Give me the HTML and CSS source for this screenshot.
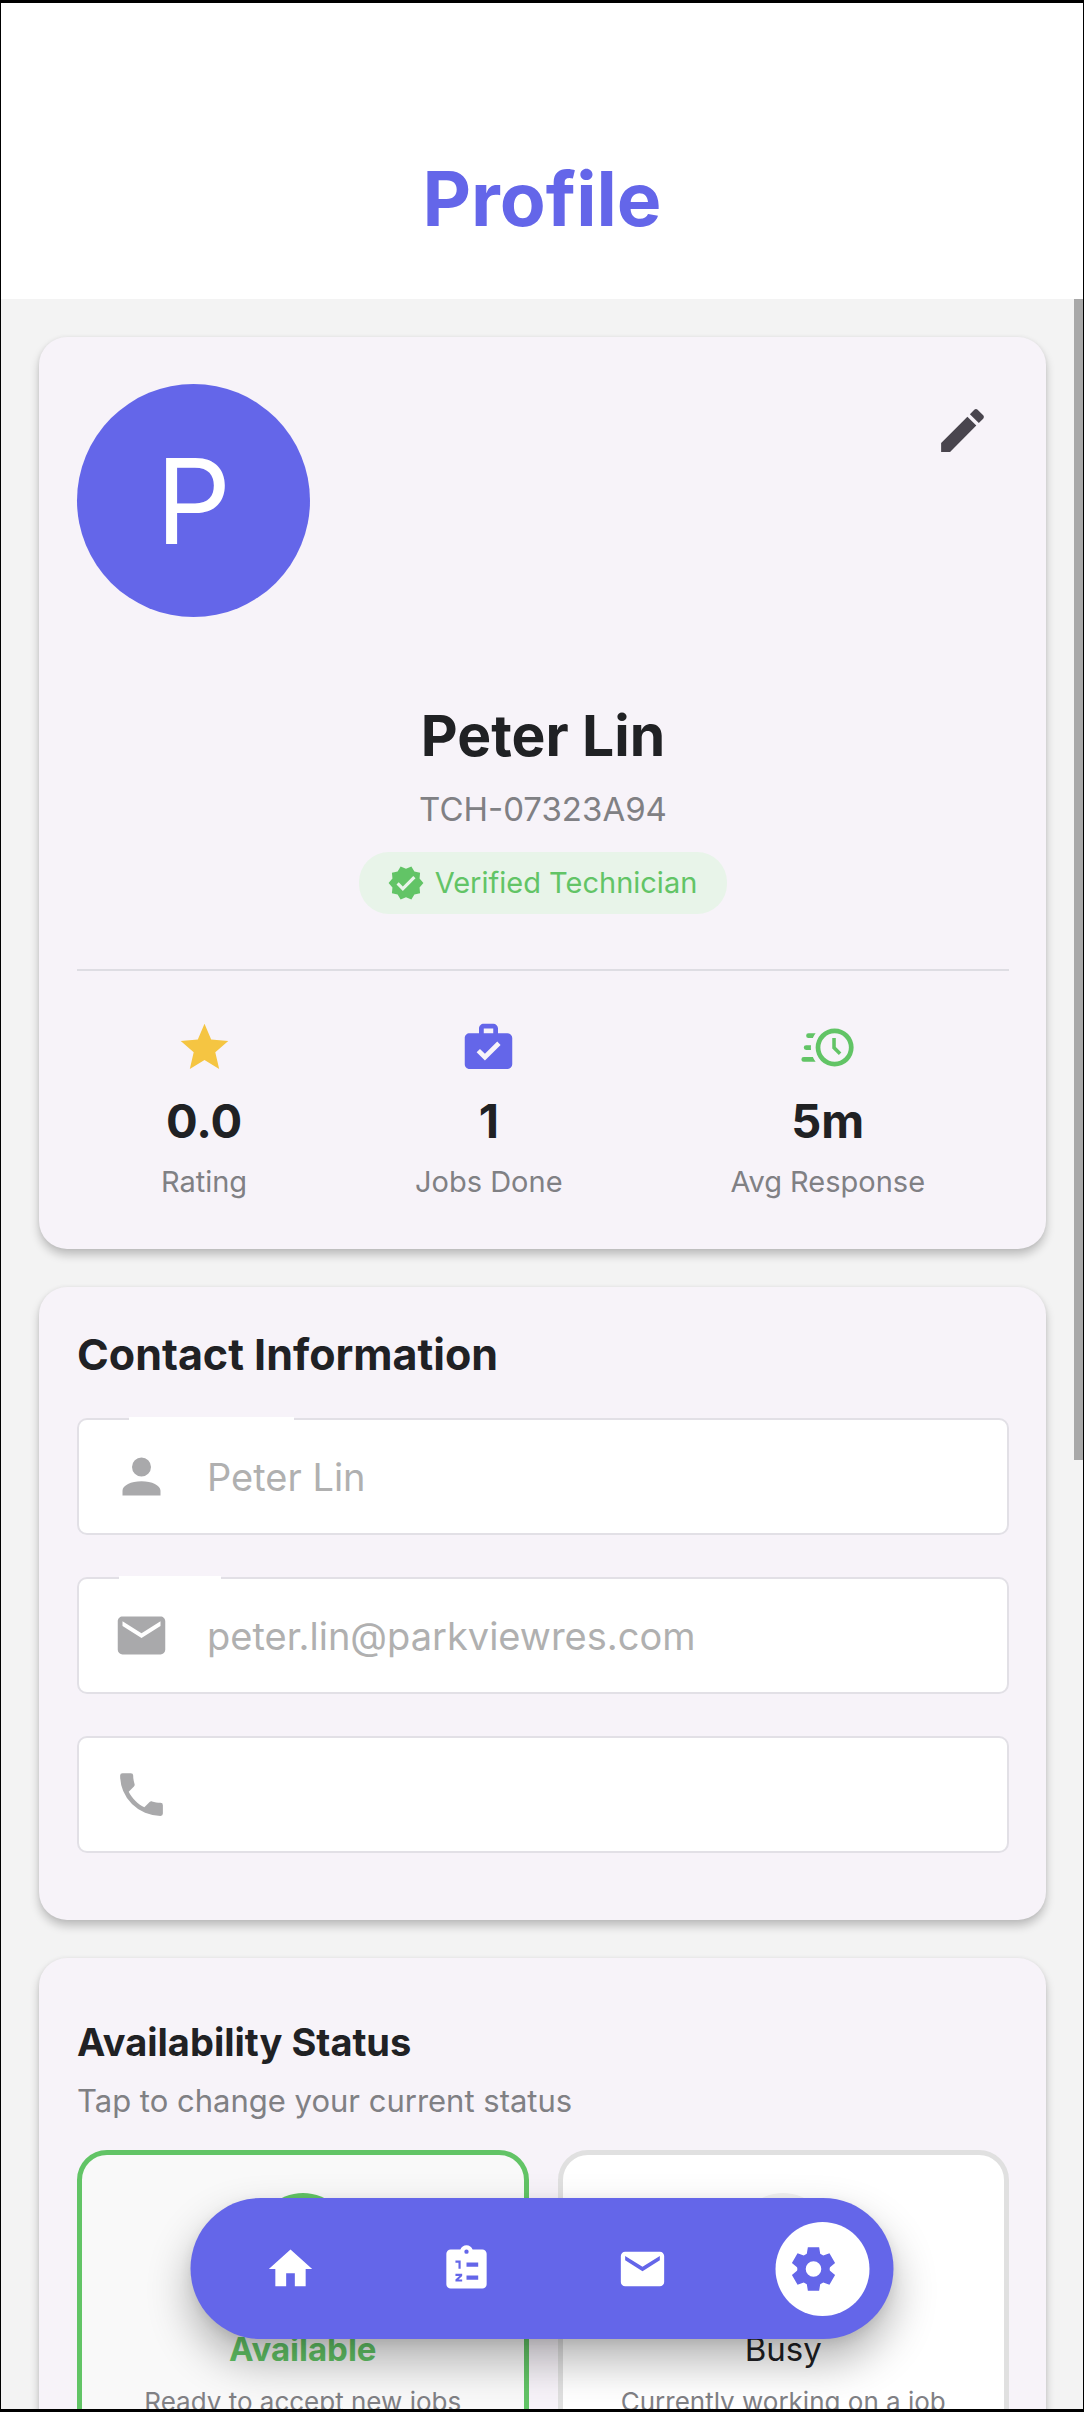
FILE: index.html
```html
<!DOCTYPE html>
<html lang="en">
<head>
<meta charset="utf-8">
<meta name="viewport" content="width=device-width, initial-scale=1">
<title>Profile</title>
<link rel="stylesheet" href="styles.css">
</head>
<body>
<div class="app">
  <header class="header"><h1>Profile</h1></header>
  <main class="content">
    <section class="card profile">
      <div class="profile-top">
        <div class="avatar">P</div>
        <button class="edit" type="button" aria-label="Edit profile">
          <svg class="icon icon-edit" viewBox="0 0 24 24"><path d="M20.71,7.04C21.1,6.65 21.1,6 20.71,5.63L18.37,3.29C18,2.9 17.35,2.9 16.96,3.29L15.12,5.12L18.87,8.87M3,17.25V21H6.75L17.81,9.93L14.06,6.18L3,17.25Z"/></svg>
        </button>
      </div>
      <div class="identity">
        <h2>Peter Lin</h2>
        <p class="code">TCH-07323A94</p>
        <p class="badge">
          <svg class="icon icon-badge" viewBox="0 0 24 24"><path d="M23,12L20.56,9.22L20.9,5.54L17.29,4.72L15.4,1.54L12,3L8.6,1.54L6.71,4.72L3.1,5.53L3.44,9.21L1,12L3.44,14.78L3.1,18.47L6.71,19.29L8.6,22.47L12,21L15.4,22.46L17.29,19.28L20.9,18.46L20.56,14.78L23,12M10,17L6,13L7.41,11.59L10,14.17L16.59,7.58L18,9L10,17Z"/></svg>
          <span>Verified Technician</span>
        </p>
      </div>
      <div class="stats">
        <div class="stat">
          <svg class="icon star" viewBox="0 0 24 24"><path d="M12,17.27L18.18,21L16.54,13.97L22,9.24L14.81,8.62L12,2L9.19,8.62L2,9.24L7.45,13.97L5.82,21L12,17.27Z"/></svg>
          <strong>0.0</strong><span>Rating</span>
        </div>
        <div class="stat">
          <svg class="icon jobs" viewBox="0 0 24 24"><path d="M10,2H14A2,2 0 0,1 16,4V6H20A2,2 0 0,1 22,8V19A2,2 0 0,1 20,21H4C2.89,21 2,20.1 2,19V8C2,6.89 2.89,6 4,6H8V4C8,2.89 8.89,2 10,2M14,6V4H10V6H14M10.5,17.5L17.09,10.91L15.68,9.5L10.5,14.67L8.41,12.59L7,14L10.5,17.5Z"/></svg>
          <strong>1</strong><span>Jobs Done</span>
        </div>
        <div class="stat">
          <svg class="icon clock" viewBox="0 0 24 24"><path d="M15,4A8,8 0 0,1 23,12A8,8 0 0,1 15,20A8,8 0 0,1 7,12A8,8 0 0,1 15,4M15,6A6,6 0 0,0 9,12A6,6 0 0,0 15,18A6,6 0 0,0 21,12A6,6 0 0,0 15,6M14,8H15.5V11.78L17.83,14.11L16.77,15.17L14,12.4V8M2,18A1,1 0 0,1 1,17A1,1 0 0,1 2,16H5.83C6.14,16.71 6.54,17.38 7,18H2M3,13A1,1 0 0,1 2,12A1,1 0 0,1 3,11H5.05L5,12L5.05,13H3M4,8A1,1 0 0,1 3,7A1,1 0 0,1 4,6H7C6.54,6.62 6.14,7.29 5.83,8H4Z"/></svg>
          <strong>5m</strong><span>Avg Response</span>
        </div>
      </div>
    </section>

    <section class="card contact">
      <h3>Contact Information</h3>
      <label class="field">
        <span class="notch notch-name"></span>
        <svg class="icon" viewBox="0 0 24 24"><path d="M12,4A4,4 0 0,1 16,8A4,4 0 0,1 12,12A4,4 0 0,1 8,8A4,4 0 0,1 12,4M12,14C16.42,14 20,15.79 20,18V20H4V18C4,15.79 7.58,14 12,14Z"/></svg>
        <input type="text" value="Peter Lin" aria-label="Full name" disabled>
      </label>
      <label class="field">
        <span class="notch notch-email"></span>
        <svg class="icon" viewBox="0 0 24 24"><path d="M20,8L12,13L4,8V6L12,11L20,6M20,4H4C2.89,4 2,4.89 2,6V18A2,2 0 0,0 4,20H20A2,2 0 0,0 22,18V6C22,4.89 21.1,4 20,4Z"/></svg>
        <input type="email" value="peter.lin@parkviewres.com" aria-label="Email" disabled>
      </label>
      <label class="field">
        <svg class="icon" viewBox="0 0 24 24"><path d="M6.62,10.79C8.06,13.62 10.38,15.94 13.21,17.38L15.41,15.18C15.69,14.9 16.08,14.82 16.43,14.93C17.55,15.3 18.75,15.5 20,15.5A1,1 0 0,1 21,16.5V20A1,1 0 0,1 20,21A17,17 0 0,1 3,4A1,1 0 0,1 4,3H7.5A1,1 0 0,1 8.5,4C8.5,5.25 8.7,6.45 9.07,7.57C9.18,7.92 9.1,8.31 8.82,8.59L6.62,10.79Z"/></svg>
        <input type="tel" aria-label="Phone" disabled>
      </label>
    </section>

    <section class="card availability">
      <h3>Availability Status</h3>
      <p class="hint">Tap to change your current status</p>
      <div class="options">
        <button class="option selected" type="button">
          <span class="dot"></span>
          <span class="option-name">Available</span>
          <span class="option-text">Ready to accept new jobs</span>
        </button>
        <button class="option" type="button">
          <span class="dot"></span>
          <span class="option-name">Busy</span>
          <span class="option-text">Currently working on a job</span>
        </button>
      </div>
    </section>
  </main>
  <div class="scrollbar"></div>
  <nav class="tabs">
    <button class="tab" type="button" aria-label="Home"><svg class="icon" viewBox="0 0 24 24"><path d="M10,20V14H14V20H19V12H22L12,3L2,12H5V20H10Z"/></svg></button>
    <button class="tab" type="button" aria-label="Jobs"><svg class="icon" viewBox="0 0 24 24"><path fill-rule="evenodd" d="M19.3,3H14.82C14.4,1.84 13.3,1 12,1C10.7,1 9.6,1.84 9.18,3H4.7A2,2 0 0,0 2.7,5V19A2,2 0 0,0 4.7,21H19.3A2,2 0 0,0 21.3,19V5A2,2 0 0,0 19.3,3M12,3A1,1 0 0,1 13,4A1,1 0 0,1 12,5A1,1 0 0,1 11,4A1,1 0 0,1 12,3M6.9,8.1H9.3V11.9H8.3V9.1H6.9ZM6.9,14.2H10V15.2L8.3,16.8H10V17.8H6.9V16.8L8.7,15.2H6.9ZM12,9H17.4V11H12ZM12,15H17.4V17H12Z"/></svg></button>
    <button class="tab" type="button" aria-label="Messages"><svg class="icon" viewBox="0 0 24 24"><path d="M20,8L12,13L4,8V6L12,11L20,6M20,4H4C2.89,4 2,4.89 2,6V18A2,2 0 0,0 4,20H20A2,2 0 0,0 22,18V6C22,4.89 21.1,4 20,4Z"/></svg></button>
    <button class="tab active" type="button" aria-label="Settings"><svg class="icon" viewBox="0 0 24 24"><path fill-rule="evenodd" d="M9.4,2H14.6L15.1,5L16.51,5.82L19.36,4.75L21.96,9.25L19.61,11.18Q19.3,12 19.61,12.82L21.96,14.75L19.36,19.25L16.51,18.18L15.1,19L14.6,22H9.4L8.9,19L7.49,18.18L4.64,19.25L2.04,14.75L4.39,12.82Q4.7,12 4.39,11.18L2.04,9.25L4.64,4.75L7.49,5.82L8.9,5ZM12,8.4A3.6,3.6 0 0,0 8.4,12A3.6,3.6 0 0,0 12,15.6A3.6,3.6 0 0,0 15.6,12A3.6,3.6 0 0,0 12,8.4Z"/></svg></button>
  </nav>
</div>
</body>
</html>
```
FILE: styles.css
```css
* {
  box-sizing: border-box;
}

body,
h1,
h2,
h3,
p {
  margin: 0;
}

body {
  font-family: Inter, "Liberation Sans", sans-serif;
  color: #202124;
}

button,
input {
  font: inherit;
  color: inherit;
}

button {
  padding: 0;
  border: 0;
  background: none;
}

.icon {
  display: block;
  flex: none;
  width: 57px;
  height: 57px;
  fill: currentColor;
}

.app {
  position: relative;
  display: flex;
  flex-direction: column;
  height: 100vh;
  border: solid #000;
  border-width: 3px 1px;
  background: #f3f3f3;
  overflow: hidden;
}

.header {
  flex: none;
  padding: 150px 24px 54px;
  background: #fff;
  color: #6466e9;
  text-align: center;
}

.header h1 {
  font-size: 75px;
  line-height: 92px;
  font-weight: 700;
}

.content {
  flex: 1;
  min-height: 0;
  display: flex;
  flex-direction: column;
  gap: 38px;
  padding: 38px 37px 0 38px;
  overflow: hidden;
}

.card {
  flex: none;
  padding: 38px 37px 38px 38px;
  border-radius: 28px;
  background: #f7f3f9;
  box-shadow: 0 6px 10px rgba(0, 0, 0, 0.22), 0 0 4px rgba(0, 0, 0, 0.06);
}

.profile {
  padding-top: 47px;
  padding-bottom: 49px;
}

.profile-top {
  display: flex;
  justify-content: space-between;
  align-items: flex-start;
}

.avatar {
  width: 233px;
  height: 233px;
  border-radius: 50%;
  background: #6466e9;
  color: #fff;
  font-size: 118px;
  line-height: 234px;
  text-align: center;
}

.edit {
  padding: 18px;
  color: #49454e;
}

.identity {
  display: flex;
  flex-direction: column;
  align-items: center;
  padding: 84px 0 55px;
}

.identity h2 {
  font-size: 57px;
  line-height: 70px;
}

.code {
  margin-top: 18px;
  font-size: 33px;
  line-height: 40px;
  color: #808084;
}

.badge {
  display: flex;
  align-items: center;
  gap: 10px;
  margin-top: 23px;
  padding: 12px 30px 12px 28px;
  border-radius: 30px;
  background: #e8f4e9;
  color: #62c466;
  font-size: 29px;
  line-height: 38px;
}

.icon-badge {
  width: 38px;
  height: 38px;
}

.stats {
  display: flex;
  justify-content: space-around;
  padding-top: 48px;
  border-top: 2px solid #dedde3;
}

.stat {
  display: flex;
  flex-direction: column;
  align-items: center;
  color: #808084;
  font-size: 29px;
  line-height: 36px;
}

.stat strong {
  margin: 16px 0 14px;
  color: #202124;
  font-size: 47px;
  line-height: 58px;
}

.star {
  color: #f5c542;
}

.jobs {
  color: #6466e9;
}

.clock {
  color: #62c466;
}

.contact {
  padding-top: 40px;
  padding-bottom: 67px;
}

.contact h3 {
  margin-bottom: 37px;
  font-size: 43px;
  line-height: 54px;
}

.field {
  position: relative;
  display: flex;
  align-items: center;
  gap: 37px;
  height: 117px;
  padding: 0 34px;
  border: 2px solid #e2e0e6;
  border-radius: 10px;
  background: #fff;
  color: #a9a9ab;
}

.field + .field {
  margin-top: 42px;
}

.field input {
  flex: 1;
  min-width: 0;
  padding: 0;
  border: 0;
  background: none;
  font-size: 38px;
  line-height: 48px;
  color: #b0b0b0;
}

.notch {
  position: absolute;
  top: -3px;
  height: 4px;
  background: #fff;
}

.notch-name {
  left: 50px;
  width: 165px;
}

.notch-email {
  left: 40px;
  width: 102px;
}

.availability {
  padding-top: 60px;
}

.availability h3 {
  font-size: 38px;
  line-height: 48px;
}

.hint {
  margin: 15px 0 29px;
  font-size: 31px;
  line-height: 40px;
  color: #808084;
}

.options {
  display: grid;
  grid-template-columns: 1fr 1fr;
  gap: 29px;
}

.option {
  display: flex;
  flex-direction: column;
  align-items: center;
  padding: 38px 20px;
  border: 5px solid #e0e0e0;
  border-radius: 30px;
  background: #fff;
}

.selected {
  border-color: #62c466;
  background: #f9f9f9;
}

.dot {
  width: 94px;
  height: 94px;
  border-radius: 50%;
  background: #f3f3f3;
}

.selected .dot {
  background: #62c466;
}

.option-name {
  margin-top: 42px;
  font-size: 33px;
  line-height: 40px;
}

.selected .option-name {
  color: #62c466;
  font-weight: 700;
}

.option-text {
  margin-top: 17px;
  font-size: 26px;
  line-height: 32px;
  color: #808084;
}

.scrollbar {
  position: absolute;
  top: 296px;
  right: 0;
  width: 9px;
  height: 1161px;
  background: #a8a8a8;
}

.tabs {
  position: absolute;
  left: 50%;
  bottom: 70px;
  transform: translateX(-50%);
  display: flex;
  align-items: center;
  gap: 82px;
  width: 703px;
  height: 141px;
  padding-left: 53px;
  border-radius: 71px;
  background: #6466e9;
  box-shadow: 0 22px 44px rgba(0, 0, 0, 0.3), 0 4px 12px rgba(0, 0, 0, 0.08);
  color: #fff;
}

.tab {
  flex: none;
  display: flex;
  align-items: center;
  justify-content: center;
  width: 94px;
  height: 94px;
  border-radius: 50%;
}

.tab .icon {
  width: 52px;
  height: 52px;
}

.active {
  margin-left: 4px;
  padding-right: 18px;
  background: #fff;
  color: #6466e9;
}
```
